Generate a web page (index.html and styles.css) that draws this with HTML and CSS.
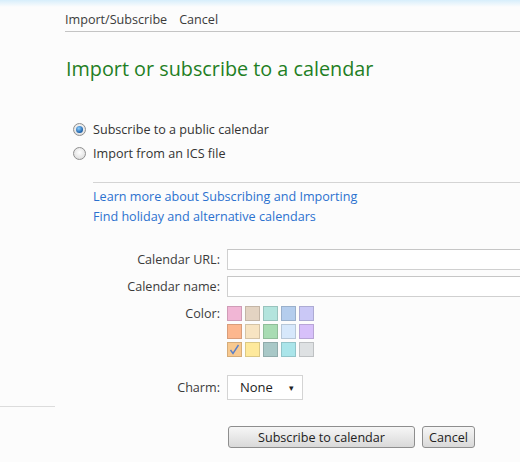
FILE: index.html
```html
<!DOCTYPE html>
<html lang="en">
<head>
    <meta charset="UTF-8">
    <title>Import or subscribe to a calendar</title>
    <link rel="stylesheet" href="styles.css">
</head>
<body>
    <div class="page">
        <aside class="side">
            <div class="side-rule"></div>
        </aside>

        <main class="main">
            <nav class="cmdbar">
                <a class="cmd">Import/Subscribe</a>
                <a class="cmd">Cancel</a>
            </nav>

            <h1>Import or subscribe to a calendar</h1>

            <div class="choices">
                <label class="choice">
                    <span class="radio checked"></span>
                    Subscribe to a public calendar
                </label>
                <label class="choice">
                    <span class="radio"></span>
                    Import from an ICS file
                </label>
            </div>

            <div class="links">
                <a class="link">Learn more about Subscribing and Importing</a>
                <a class="link">Find holiday and alternative calendars</a>
            </div>

            <div class="form">
                <label class="field-label">Calendar URL:</label>
                <input class="text-input" type="text">

                <label class="field-label">Calendar name:</label>
                <input class="text-input" type="text">

                <label class="field-label color-label">Color:</label>
                <div class="swatches">
                    <span class="swatch" style="background:#f1b6d5"></span>
                    <span class="swatch" style="background:#e3d3c2"></span>
                    <span class="swatch" style="background:#b3e4dd"></span>
                    <span class="swatch" style="background:#b4cded"></span>
                    <span class="swatch" style="background:#cac8f6"></span>
                    <span class="swatch" style="background:#fcb78e"></span>
                    <span class="swatch" style="background:#f7e4c2"></span>
                    <span class="swatch" style="background:#a8dcb3"></span>
                    <span class="swatch" style="background:#d7e8fb"></span>
                    <span class="swatch" style="background:#d7c0fa"></span>
                    <span class="swatch selected" style="background:#f8c98f">
                        <svg width="11" height="11" viewBox="0 0 11 11" fill="none" stroke="#5a7fc8" stroke-width="1.4">
                            <path d="M1.5 6l2.5 3.5L9.5 1"></path>
                        </svg>
                    </span>
                    <span class="swatch" style="background:#fee99c"></span>
                    <span class="swatch" style="background:#a8c8c7"></span>
                    <span class="swatch" style="background:#aae5ea"></span>
                    <span class="swatch" style="background:#dee1e3"></span>
                </div>

                <label class="field-label charm-label">Charm:</label>
                <div class="charm-row">
                    <div class="select">
                        <span>None</span>
                        <span class="caret">&#9662;</span>
                    </div>
                </div>
            </div>

            <div class="actions">
                <button class="btn btn-wide">Subscribe to calendar</button>
                <button class="btn">Cancel</button>
            </div>
        </main>
    </div>
</body>
</html>
```

FILE: styles.css
```css
body {
    margin: 0;
    background: #fcfcfc;
    font-family: "Open Sans", "Noto Sans", sans-serif;
    font-size: 12.6px;
    line-height: 17px;
    color: #333;
    overflow: hidden;
}

.page {
    display: flex;
    width: 520px;
    height: 462px;
    overflow: hidden;
    background: linear-gradient(180deg, #d7eefb 0px, #fcfcfc 7px);
}

.side {
    width: 55px;
    flex-shrink: 0;
}

.side-rule {
    height: 406px;
    border-bottom: 1px solid #dcdcdc;
}

.main {
    flex: 1;
    padding-left: 10px;
    min-width: 0;
}

/* command bar */
.cmdbar {
    display: flex;
    gap: 12px;
    padding-top: 11px;
    height: 20px;
    border-bottom: 1px solid #c4c4c4;
}

.cmd {
    color: #3b3b3b;
}

h1 {
    margin: 24px 0 0 1px;
    font-size: 19.8px;
    font-weight: 400;
    color: #1f7f24;
    line-height: 26px;
}

/* radio choices */
.choices {
    margin: 39px 0 0 8px;
    display: flex;
    flex-direction: column;
    gap: 7px;
}

.choice {
    display: flex;
    align-items: center;
    gap: 7px;
    height: 17px;
}

.radio {
    width: 11px;
    height: 11px;
    border-radius: 50%;
    border: 1px solid #8f8f8f;
    background: radial-gradient(circle at 50% 40%, #ffffff, #d6d6d6);
    position: relative;
}

.radio.checked::after {
    content: "";
    position: absolute;
    left: 2px;
    top: 2px;
    width: 7px;
    height: 7px;
    border-radius: 50%;
    background: radial-gradient(circle at 40% 35%, #8fd0ff, #1a5fa8 70%);
}

/* links */
.links {
    margin: 20px 0 0 28px;
    padding-top: 5px;
    border-top: 1px solid #d4d4d4;
    display: flex;
    flex-direction: column;
    gap: 3px;
}

.link {
    color: #2b71cf;
}

/* form */
.form {
    margin-top: 24px;
    display: grid;
    grid-template-columns: 155px 1fr;
    column-gap: 7px;
    row-gap: 6px;
    align-items: center;
}

.field-label {
    text-align: right;
    color: #3b3b3b;
}

.text-input {
    height: 21px;
    width: 320px;
    box-sizing: border-box;
    border: 1px solid #d0d0d0;
    border-top-color: #c6c6c6;
    background: #fff;
    margin: 0;
    padding: 0 4px;
}

.color-label {
    align-self: start;
    margin-top: 2px;
}

.swatches {
    display: grid;
    grid-template-columns: repeat(5, 15px);
    gap: 3px;
    margin-top: 3px;
}

.swatch {
    width: 15px;
    height: 15px;
    box-sizing: border-box;
    border: 1px solid rgba(0, 0, 0, 0.14);
    display: flex;
    align-items: center;
    justify-content: center;
}

.charm-label,
.charm-row {
    margin-top: 12px;
}

.select {
    width: 76px;
    height: 25px;
    box-sizing: border-box;
    border: 1px solid #d4d4d4;
    background: #fff;
    display: flex;
    align-items: center;
    justify-content: space-between;
    padding: 0 8px 0 12px;
    color: #222;
    font-size: 13px;
}

.caret {
    font-size: 9px;
}

/* buttons */
.actions {
    display: flex;
    gap: 7px;
    margin: 26px 0 0 163px;
}

.btn {
    height: 22px;
    padding: 0 6px;
    border: 1px solid #8e8e8e;
    border-radius: 3px;
    background: linear-gradient(180deg, #f6f6f6 0%, #e8e8e8 50%, #d9d9d9 100%);
    font-family: inherit;
    font-size: 12.6px;
    color: #222;
}

.btn-wide {
    width: 187px;
}
```
